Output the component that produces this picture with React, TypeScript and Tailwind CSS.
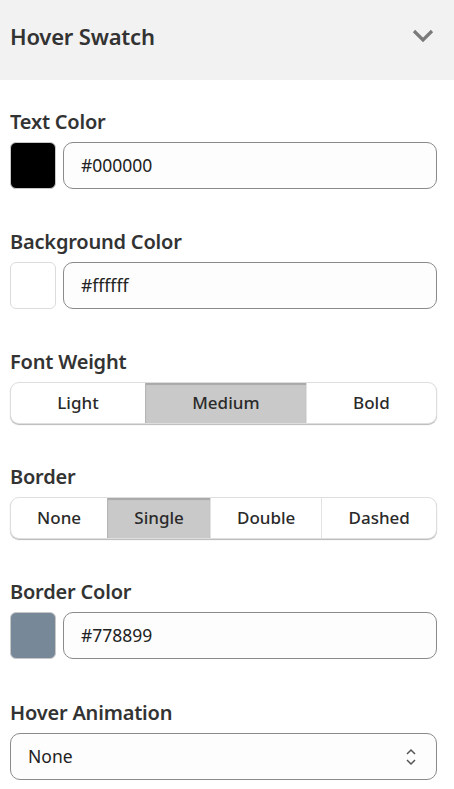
import React from 'react';

const FONT = { fontFamily: '"Noto Sans", "Open Sans", sans-serif' };

function Label({ children }: { children: React.ReactNode }) {
  return <div className="text-[20px] leading-6 font-semibold text-[#333] mb-[8px] tracking-[-0.2px]">{children}</div>;
}

function ColorField({ label, value, swatch, light }: { label: string; value: string; swatch: string; light?: boolean }) {
  return (
    <div>
      <Label>{label}</Label>
      <div className="flex gap-[7px] h-[47px]">
        <div
          className={`w-[46px] h-[47px] shrink-0 rounded-[6px] border ${light ? 'border-[#dcdcdc]' : 'border-[#c8c8c8]'}`}
          style={{ backgroundColor: swatch }}
        />
        <div className="flex-1 flex items-center rounded-[10px] border border-[#8a8a8a] bg-[#fdfdfd] pl-[17px] text-[17.5px] text-[#222]">
          {value}
        </div>
      </div>
    </div>
  );
}

function Segmented({ label, options, selected }: { label: string; options: string[]; selected: string }) {
  return (
    <div>
      <Label>{label}</Label>
      <div className="flex h-[42px] rounded-[9px] border border-[#dedede] shadow-[0_1px_1px_#b8b8b8] overflow-hidden bg-white">
        {options.map((opt, i) => (
          <div
            key={opt}
            className={`flex-auto flex items-center justify-center text-[17px] font-medium text-[#2a2a2a] ${
              i > 0 ? 'border-l border-[#e2e2e2]' : ''
            } ${opt === selected ? 'bg-[#c9c9c9] shadow-[inset_0_2px_1px_#a9a9a9] border-l-[#b5b5b5]' : ''}`}
          >
            {opt}
          </div>
        ))}
      </div>
    </div>
  );
}

export default function App() {
  return (
    <div className="w-[454px] min-h-[789px] bg-white" style={FONT}>
      <div className="h-20 bg-[#f2f2f2] flex items-center justify-between pl-[10px] pr-[20px]">
        <div className="text-[22px] font-semibold text-[#333] leading-none pb-[8px] tracking-[-0.2px]">Hover Swatch</div>
        <svg width="22" height="16" viewBox="0 0 22 16" className="mb-[8px]">
          <path d="M2 3 L11 12 L20 3" fill="none" stroke="#7a7a7a" strokeWidth="3.2" />
        </svg>
      </div>

      <div className="pl-[10px] pr-[17px] pt-[30px] flex flex-col gap-[41px]">
        <ColorField label="Text Color" value="#000000" swatch="#000000" />
        <ColorField label="Background Color" value="#ffffff" swatch="#ffffff" light />
        <Segmented label="Font Weight" options={['Light', 'Medium', 'Bold']} selected="Medium" />
        <Segmented label="Border" options={['None', 'Single', 'Double', 'Dashed']} selected="Single" />
        <ColorField label="Border Color" value="#778899" swatch="#778899" />
        <div className="pt-[1px]">
          <Label>Hover Animation</Label>
          <div className="h-[47px] flex items-center justify-between rounded-[10px] border border-[#8a8a8a] bg-[#fdfdfd] pl-[17px] pr-[19px] text-[17.5px] text-[#222]">
            <span>None</span>
            <svg width="12" height="18" viewBox="0 0 12 18">
              <path d="M2 6 L6 2 L10 6 M2 12 L6 16 L10 12" fill="none" stroke="#555" strokeWidth="1.5" />
            </svg>
          </div>
        </div>
      </div>
    </div>
  );
}
